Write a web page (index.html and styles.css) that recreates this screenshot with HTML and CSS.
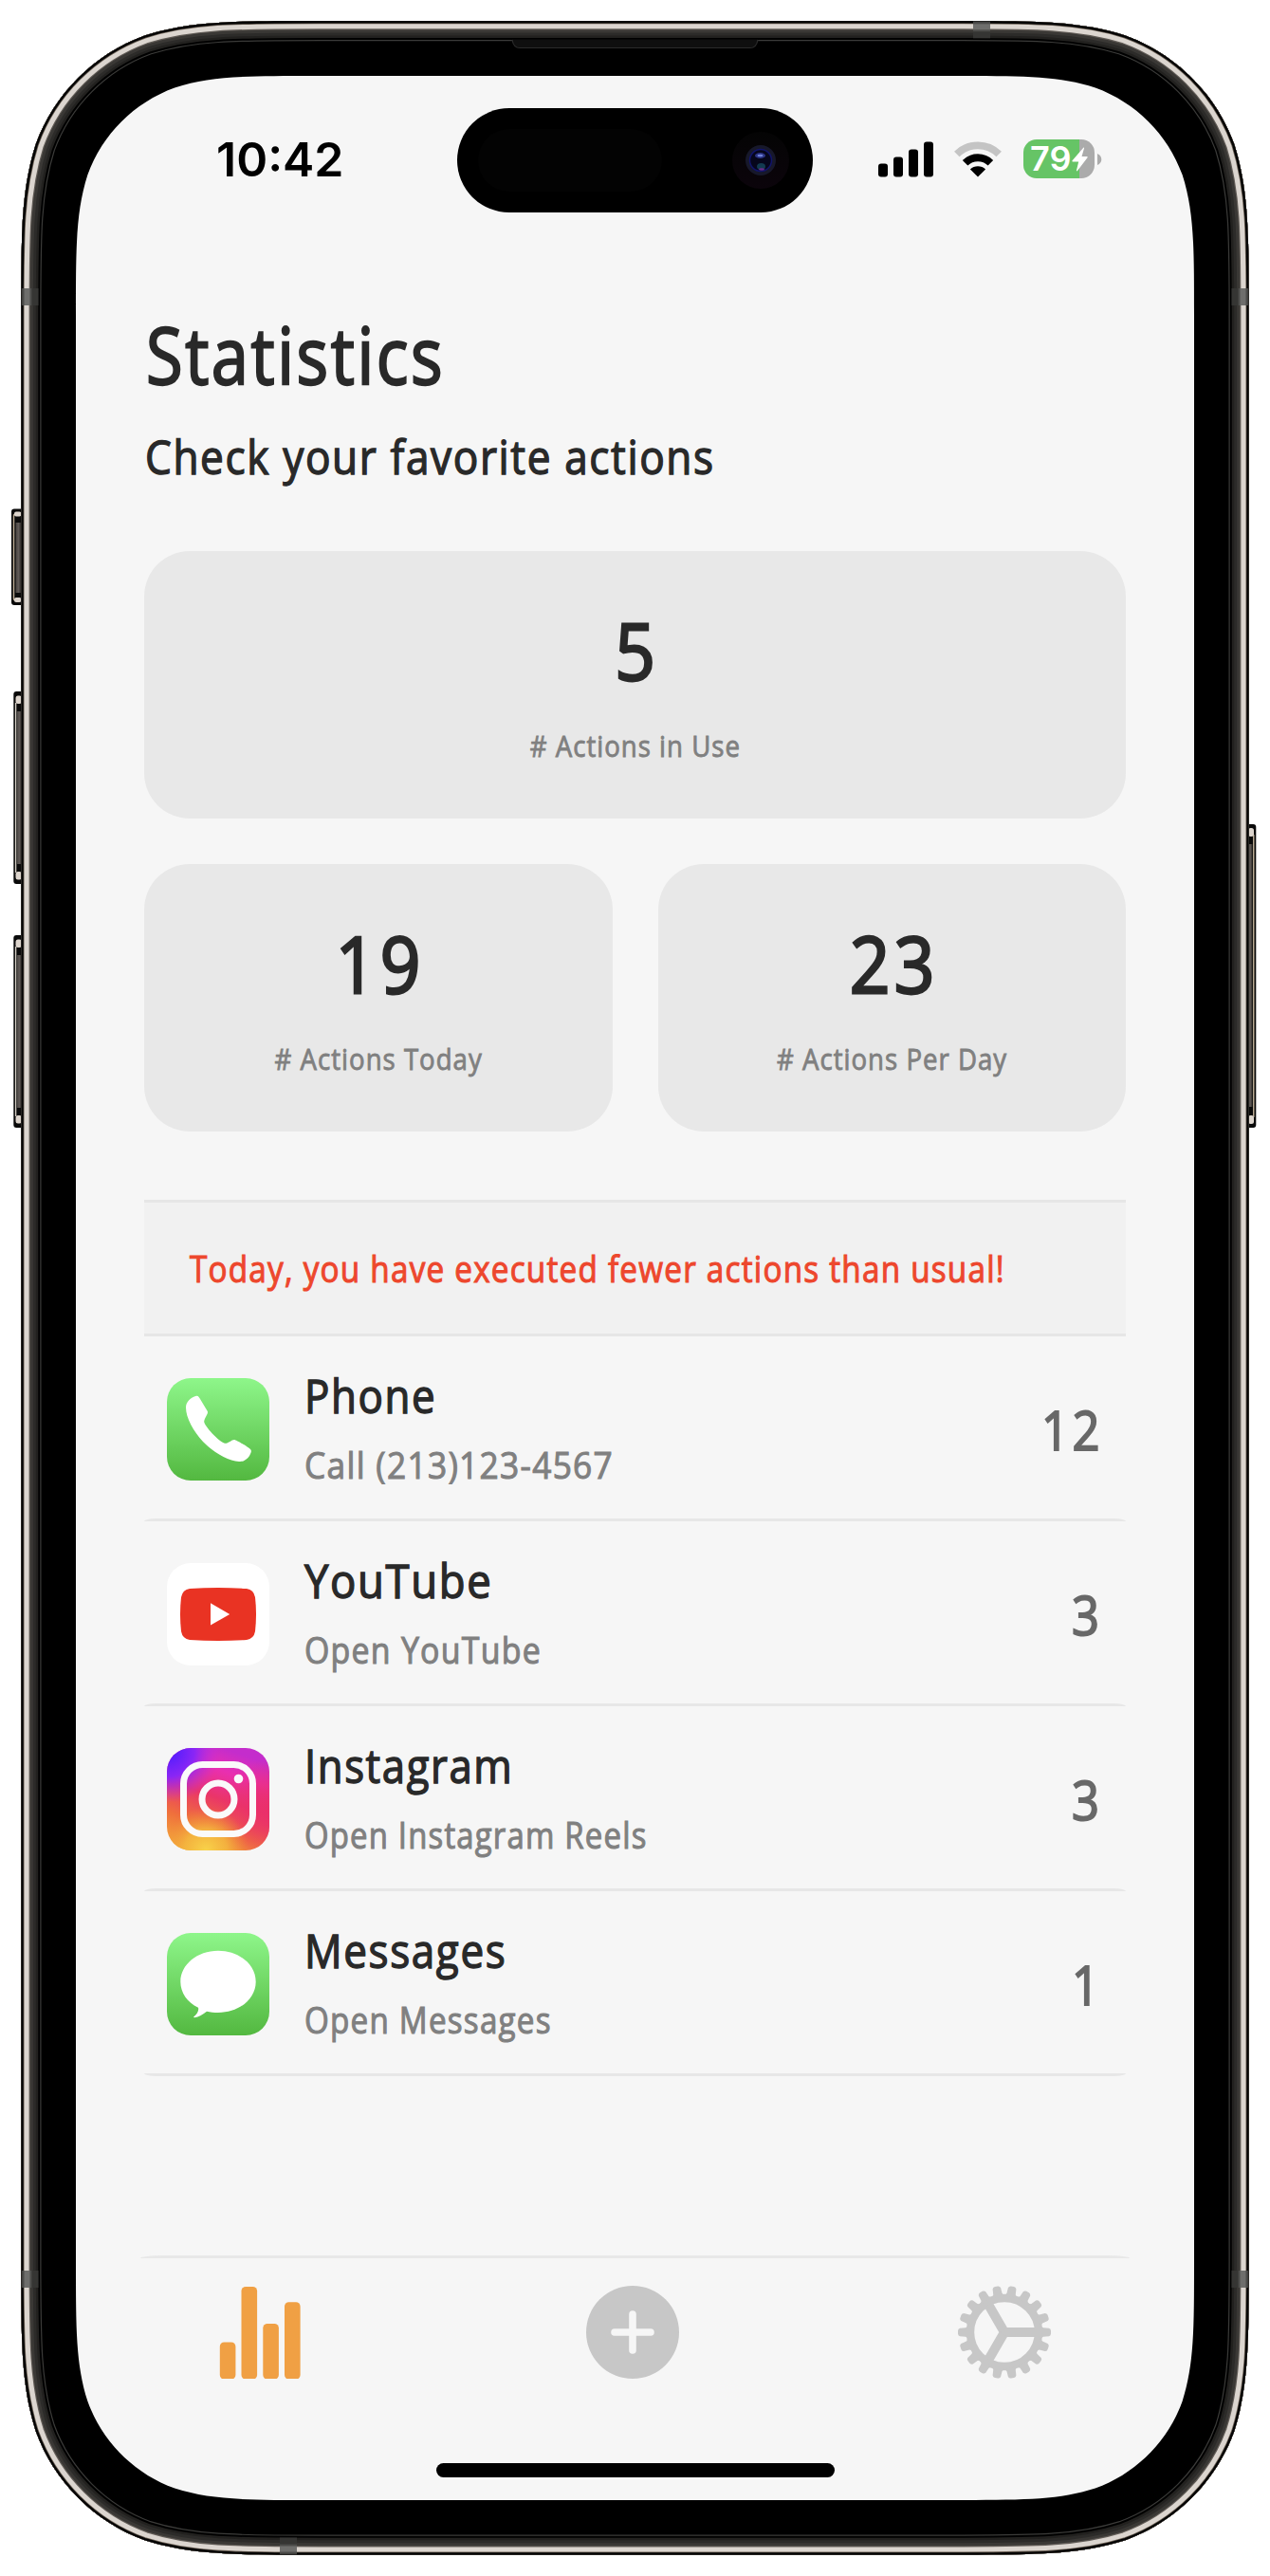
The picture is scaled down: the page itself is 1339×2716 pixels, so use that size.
FILE: index.html
```html
<!DOCTYPE html>
<html lang="en">
<head>
<meta charset="utf-8">
<title>Statistics</title>
<link rel="stylesheet" href="styles.css">
</head>
<body>
<div class="phone">
  <svg class="frame" viewBox="0 0 1339 2716" aria-hidden="true">
    <defs>
      <path id="body" d="M22.3 336.9c0-90.7 0-136 15.4-184.8c19.4-53.3 61.4-95.3 114.7-114.7c48.8-15.4 94.1-15.4 184.8-15.4h664.6c90.7 0 136 0 184.8 15.4c53.3 19.4 95.3 61.4 114.7 114.7c15.4 48.8 15.4 94.1 15.4 184.8v2041.9c0 90.7 0 136-15.4 184.8c-19.4 53.3-61.4 95.3-114.7 114.7c-48.8 15.4-94.1 15.4-184.8 15.4h-664.6c-90.7 0-136 0-184.8-15.4c-53.3-19.4-95.3-61.4-114.7-114.7c-15.4-48.8-15.4-94.1-15.4-184.8z"/>
      <clipPath id="bodyClip"><use href="#body"/></clipPath>
      <linearGradient id="key" x1="0" x2="1"><stop offset="0" stop-color="#47423f"/><stop offset=".5" stop-color="#615b58"/><stop offset="1" stop-color="#2a2725"/></linearGradient>
      <g id="band">
        <rect width="18" height="18" fill="#353533"/>
        <rect x="1" width="10" height="18" fill="#4c4c4a"/>
        <rect x="3" width="6" height="18" fill="#6e6e6c"/>
      </g>
      <g id="longKey">
        <rect x="0" y="0" width="14" height="203" rx="3" fill="#0a0a0a"/>
        <rect x="1.6" y="12" width="1.4" height="179" fill="#d5cec4"/>
        <rect x="2.2" y="4.5" width="6.5" height="8.5" rx="2.5" fill="#ddd5cd"/>
        <rect x="2.2" y="190" width="6.5" height="8.5" rx="2.5" fill="#ddd5cd"/>
        <rect x="3.6" y="21" width="5" height="161" fill="url(#key)"/>
      </g>
    </defs>
    <rect x="12" y="536.5" width="14" height="101.500" rx="3" fill="#0a0a0a"/>
    <path d="M22 542h-5.500q-2 0-2 2v87q0 2 2 2h5.500" fill="none" stroke="#b9a992" stroke-width="1.500"/>
    <rect x="15" y="539.500" width="7.500" height="5" rx="2" fill="#ddd5cd"/>
    <rect x="15" y="630" width="7.500" height="5" rx="2" fill="#ddd5cd"/>
    <rect x="16.500" y="551" width="6" height="74" fill="url(#key)"/>
    <use href="#longKey" x="14.300" y="729"/>
    <use href="#longKey" x="14.300" y="986"/>
    <g>
      <rect x="1310" y="869" width="14.300" height="320" rx="3" fill="#0a0a0a"/>
      <rect x="1321" y="880" width="1.500" height="298" fill="#b9a992"/>
      <rect x="1316" y="873" width="6" height="9" rx="2.500" fill="#ddd5cd"/>
      <rect x="1316" y="1176" width="6" height="9" rx="2.500" fill="#ddd5cd"/>
      <rect x="1316" y="890" width="4.500" height="277" fill="url(#key)"/>
    </g>
    <g clip-path="url(#bodyClip)">
      <use href="#body" fill="#000"/>
      <g fill="none">
        <use href="#body" stroke="#3b3b39" stroke-width="42.400"/>
        <use href="#body" stroke="#000" stroke-width="40"/>
        <use href="#body" stroke="#22211f" stroke-width="36"/>
        <use href="#body" stroke="#2c2b29" stroke-width="31"/>
        <use href="#body" stroke="#3a3835" stroke-width="25"/>
        <use href="#body" stroke="#605b56" stroke-width="19"/>
        <use href="#body" stroke="#dbd5cf" stroke-width="16.600"/>
        <use href="#body" stroke="#6b6055" stroke-width="6.400"/>
        <use href="#body" stroke="#050505" stroke-width="4.800"/>
      </g>
      <use href="#band" transform="translate(22.500 304)"/>
      <use href="#band" transform="translate(22.500 2394)"/>
      <use href="#band" transform="translate(1316.500 304) scale(-1 1)"/>
      <use href="#band" transform="translate(1316.500 2394) scale(-1 1)"/>
      <use href="#band" transform="translate(1044 22.300) rotate(90)"/>
      <use href="#band" transform="translate(295 2693.500) rotate(-90)"/>
      <path d="M540 41.500q1.500 8.500 8 8.500h243q6.500 0 8-8.500z" fill="#0f0f0f"/>
      <path d="M540 42q1.500 8.500 8 8.500h243q6.500 0 8-8.500" fill="none" stroke="#2b2b2b" stroke-width="1.200"/>
    </g>
    <path fill="#f6f6f6" d="M80 332.200c0-72.600 0-108.900 12.400-148c15.500-42.700 49.100-76.300 91.800-91.800c39.100-12.400 75.400-12.400 148-12.400h674.600c72.600 0 108.900 0 148 12.400c42.700 15.500 76.300 49.100 91.800 91.800c12.400 39.100 12.400 75.400 12.400 148v2051.600c0 72.600 0 108.900-12.400 148c-15.500 42.700-49.100 76.300-91.800 91.800c-39.100 12.400-75.400 12.400-148 12.400h-674.600c-72.600 0-108.900 0-148-12.400c-42.700-15.500-76.300-49.100-91.800-91.800c-12.400-39.100-12.400-75.400-12.400-148z"/>
  </svg>

  <div class="screen">
    <header class="status">
      <span class="time">10:42</span>
      <div class="island">
        <span class="sensor"></span>
        <svg class="camera" viewBox="-30 -30 60 60">
          <defs><linearGradient id="glass" x1="0" y1="0" x2="0" y2="1"><stop offset="0" stop-color="#040404"/><stop offset="1" stop-color="#0b040b"/></linearGradient></defs>
          <circle r="30" fill="url(#glass)"/>
          <circle r="16" fill="#17182a"/>
          <circle r="11.500" fill="#06061c" stroke="#11146a" stroke-width="1.500"/>
          <ellipse cx="-.5" cy="-5" rx="5.500" ry="3" fill="#2c3484"/>
          <ellipse cx="-.5" cy="-5" rx="3" ry="1.200" fill="#6f80d8"/>
          <ellipse cx=".5" cy="6.500" rx="4.500" ry="3.500" fill="#123a50"/>
          <ellipse cx="1" cy="9.500" rx="3" ry="1.300" fill="#6a2a8a"/>
        </svg>
      </div>
      <div class="indicators">
        <svg class="signal" viewBox="0 0 58 38">
          <rect x="0" y="23.500" width="10" height="14" rx="3"/><rect x="16" y="16.500" width="10" height="21" rx="3"/><rect x="32" y="8.500" width="10" height="29" rx="3"/><rect x="48" y=".5" width="10" height="37" rx="3"/>
        </svg>
        <svg class="wifi" viewBox="0 0 50 38">
          <path d="M2.800 13.500A31.500 31.500 0 0 1 47.200 13.500" fill="none" stroke="#c4c4c4" stroke-width="7.800"/>
          <path d="M11.600 22.800A19 19 0 0 1 38.400 22.800" fill="none" stroke="#000" stroke-width="7.800"/>
          <path d="M16.900 29.400A12 12 0 0 1 33.100 29.400L25 37.600Z"/>
        </svg>
        <div class="battery">
          <span class="level">79</span>
          <svg class="bolt" viewBox="0 0 17 26"><path d="M12.500 .5Q13.200 0 13 1.500L10.500 10H16Q17.200 10.200 16.300 11.500L6 25Q4.700 26 5 24.500L7.200 15.500H1Q-.2 15.300 .8 14Z"/></svg>
        </div>
        <svg class="nub" viewBox="0 0 5 12"><path d="M0 0Q4.300 2 4.300 6T0 12Z"/></svg>
      </div>
    </header>

    <main class="content">
      <h1 class="title"><span class="fit fit-92">Statistics</span></h1>
      <p class="subtitle"><span class="fit fit-95">Check your favorite actions</span></p>

      <section class="cards">
        <div class="card wide"><strong>5</strong><span class="fit">#&nbsp;Actions in Use</span></div>
        <div class="card"><strong>19</strong><span class="fit">#&nbsp;Actions Today</span></div>
        <div class="card"><strong>23</strong><span class="fit">#&nbsp;Actions Per Day</span></div>
      </section>

      <div class="banner"><span class="fit fit-944">Today, you have executed fewer actions than usual!</span></div>

      <ul class="list">
        <li class="row">
          <svg class="app" viewBox="0 0 108 108">
            <defs><linearGradient id="green" x1="0" y1="0" x2="0" y2="1"><stop offset="0" stop-color="#8ef68a"/><stop offset="1" stop-color="#53b840"/></linearGradient></defs>
            <rect width="108" height="108" rx="25" fill="url(#green)"/>
            <path fill="#fff" d="M20 31C20 25 25 20.500 31 18.800C33 18.300 34.200 20.500 35 22L42.800 35C43.800 37.500 40 41 39.200 45.500C38.500 49.500 55 67.500 61 68.800C65 69 68 65 71 65C73 65 86 73 88 75C90 77 88 80 87 82C84.500 86 80 88.500 76 88C65 87 50 79.500 38 67C28 56 20 42 20 31Z"/>
          </svg>
          <div class="names"><b class="fit fit-937">Phone</b><span class="fit fit-100">Call (213)123-4567</span></div>
          <span class="count">12</span>
        </li>
        <li class="row">
          <svg class="app" viewBox="0 0 108 108">
            <rect width="108" height="108" rx="25" fill="#fff"/>
            <path fill="#e93323" d="M24 27Q54 25 84 27Q91.500 28 93 36Q95 54 93 72Q91.500 80 84 81Q54 83 24 81Q16.500 80 15 72Q13 54 15 36Q16.500 28 24 27Z"/>
            <path fill="#fff" d="M46 42.300L66.200 54L46 65.500Z"/>
          </svg>
          <div class="names"><b class="fit fit-97">YouTube</b><span class="fit fit-957">Open YouTube</span></div>
          <span class="count">3</span>
        </li>
        <li class="row">
          <svg class="app" viewBox="0 0 108 108">
            <defs>
              <linearGradient id="ig" x1=".2" y1="1" x2=".55" y2="0"><stop offset="0" stop-color="#f3a93a"/><stop offset=".28" stop-color="#ef6f3c"/><stop offset=".55" stop-color="#ea3568"/><stop offset=".8" stop-color="#e92fb0"/><stop offset="1" stop-color="#c42dcc"/></linearGradient>
              <radialGradient id="igBlue" cx=".02" cy=".03" r=".5"><stop offset="0" stop-color="#4a1cff"/><stop offset=".5" stop-color="#8a26f5"/><stop offset="1" stop-color="#c42fe0" stop-opacity="0"/></radialGradient>
              <radialGradient id="igGold" cx=".38" cy="1" r=".42"><stop offset="0" stop-color="#f8d34a"/><stop offset=".5" stop-color="#f4b73f" stop-opacity=".85"/><stop offset="1" stop-color="#f08a3a" stop-opacity="0"/></radialGradient>
              <radialGradient id="igPink" cx="1" cy=".6" r=".5"><stop offset="0" stop-color="#ea2f6a"/><stop offset="1" stop-color="#ea2f6a" stop-opacity="0"/></radialGradient>
            </defs>
            <rect width="108" height="108" rx="25" fill="url(#ig)"/>
            <rect width="108" height="108" rx="25" fill="url(#igPink)"/>
            <rect width="108" height="108" rx="25" fill="url(#igBlue)"/>
            <rect width="108" height="108" rx="25" fill="url(#igGold)"/>
            <rect x="17.500" y="17.500" width="73" height="73" rx="20" fill="none" stroke="#fafafa" stroke-width="7"/>
            <circle cx="54" cy="54" r="17" fill="none" stroke="#fafafa" stroke-width="7"/>
            <circle cx="75.500" cy="32.500" r="4.800" fill="#fafafa"/>
          </svg>
          <div class="names"><b class="fit fit-94">Instagram</b><span class="fit fit-93">Open Instagram Reels</span></div>
          <span class="count">3</span>
        </li>
        <li class="row">
          <svg class="app" viewBox="0 0 108 108">
            <rect width="108" height="108" rx="25" fill="url(#green)"/>
            <path fill="#fff" d="M54 18.700c22 0 39.700 14.600 39.700 32.700S76 84 54 84c-4 0-8.500-.4-12-1.200c-4 3.200-8.500 6-13 6.500c-1.200 0-1-.8 0-1.500c2.500-2 5-6 4-9C21.500 73 14.300 63 14.300 51.400C14.300 33.300 32 18.700 54 18.700z"/>
          </svg>
          <div class="names"><b class="fit fit-947">Messages</b><span class="fit fit-94">Open Messages</span></div>
          <span class="count">1</span>
        </li>
      </ul>
    </main>

    <nav class="tabs">
      <svg viewBox="0 0 98 98" fill="#f0a044">
        <rect x="6.800" y="59.500" width="16.600" height="39" rx="4.500"/><rect x="29.500" y="1" width="16.600" height="97.500" rx="4.500"/><rect x="52.300" y="40" width="16.600" height="58.500" rx="4.500"/><rect x="75" y="17.300" width="16.600" height="81.200" rx="4.500"/>
      </svg>
      <svg viewBox="0 0 98 98">
        <circle cx="49" cy="49" r="49" fill="#c7c7c7"/>
        <path d="M49 30v38M30 49h38" stroke="#f6f6f6" stroke-width="7.600" stroke-linecap="round"/>
      </svg>
      <svg viewBox="-49 -49 98 98" fill="#c7c7c7" stroke="#c7c7c7">
        <circle r="36" fill="none" stroke-width="8.400"/>
        <path d="M-16.500-28.600L0 0L-16.500 28.600M0 0H34" fill="none" stroke-width="10"/>
        <path d="M-5 0L2.500-4.500V4.500Z" stroke="none"/>
        <defs><path id="tooth" stroke="none" d="M38-6.700L41-4.700L47-4.300Q49-3.500 49-1.500V1.500Q49 3.500 47 4.300L41 4.700L38 6.700Z"/></defs>
        <use href="#tooth"/><use href="#tooth" transform="rotate(20)"/><use href="#tooth" transform="rotate(40)"/><use href="#tooth" transform="rotate(60)"/><use href="#tooth" transform="rotate(80)"/><use href="#tooth" transform="rotate(100)"/><use href="#tooth" transform="rotate(120)"/><use href="#tooth" transform="rotate(140)"/><use href="#tooth" transform="rotate(160)"/><use href="#tooth" transform="rotate(180)"/><use href="#tooth" transform="rotate(200)"/><use href="#tooth" transform="rotate(220)"/><use href="#tooth" transform="rotate(240)"/><use href="#tooth" transform="rotate(260)"/><use href="#tooth" transform="rotate(280)"/><use href="#tooth" transform="rotate(300)"/><use href="#tooth" transform="rotate(320)"/><use href="#tooth" transform="rotate(340)"/>
      </svg>
    </nav>
    <div class="home"></div>
  </div>
</div>
</body>
</html>
```
FILE: styles.css
```css
* { box-sizing: border-box; margin: 0; padding: 0; }
body { background: #fff; font-family: "Open Sans", "Noto Sans", sans-serif; font-weight: 400; color: #292929; }
svg { display: block; flex: none; }

.phone { position: relative; width: 1339px; height: 2716px; overflow: hidden; }
.frame { position: absolute; inset: 0; width: 1339px; height: 2716px; }
.screen { position: relative; display: flex; flex-direction: column; width: 1339px; padding: 114px 80px 0; }

/* status bar */
.status { display: grid; grid-template-columns: 254px 375px 1fr; align-items: center; height: 110px; padding-left: 148px; }
.time { font: 600 50px/60px Inter, sans-serif; color: #000; padding-bottom: 2px; }
.island { display: flex; align-items: center; justify-content: space-between; height: 110px; border-radius: 55px; background: #000; padding: 0 25px 0 22px; }
.sensor { width: 194px; height: 66px; border-radius: 33px; background: #030303; }
.camera { width: 60px; height: 60px; }
.indicators { display: flex; align-items: center; padding-left: 69px; padding-bottom: 3px; }
.signal { width: 58px; height: 38px; }
.wifi { width: 50px; height: 38px; margin-left: 22px; }
.battery { display: flex; align-items: center; width: 75px; height: 41px; margin-left: 23px; padding-left: 7px; border-radius: 14px; background: linear-gradient(90deg, #66c466 59px, #ababab 59px); }
.level { font: 600 36px/41px Inter, sans-serif; color: #fff; width: 44px; }
.bolt { width: 17px; height: 26px; fill: #fff; }
.nub { width: 5px; height: 12px; margin-left: 3px; fill: #ababab; }

.content { padding: 104px 72px 0; }

/* condensed, medium-weight text with open tracking */
.fit { display: inline-block; white-space: nowrap; letter-spacing: .0365em; transform: scaleX(.89); transform-origin: left; -webkit-text-stroke: 0.028em currentColor; }
.fit-92 { transform: scaleX(.859); }
.fit-93 { transform: scaleX(.865); }
.fit-937 { transform: scaleX(.878); }
.fit-94 { transform: scaleX(.874); }
.fit-944 { transform: scaleX(.876); }
.fit-947 { transform: scaleX(.881); }
.fit-95 { transform: scaleX(.883); }
.fit-957 { transform: scaleX(.892); }
.fit-97 { transform: scaleX(.909); }
.fit-100 { transform: scaleX(.929); }

.title { font-size: 82px; line-height: 90px; font-weight: 400; padding-left: 2px; height: 90px; }
.subtitle { font-size: 50px; line-height: 60px; margin-top: 33px; height: 60px; padding-left: 1px; }

.cards { display: grid; grid-template-columns: 1fr 1fr; gap: 48px; margin-top: 70px; }
.card { display: flex; flex-direction: column; align-items: center; gap: 36px; height: 282px; padding-top: 59px; border-radius: 48px; background: #e8e8e8; }
.card strong { font-size: 82px; line-height: 90px; font-weight: 400; letter-spacing: .06em; margin-right: -.06em; transform: scaleX(.91); -webkit-text-stroke: 0.034em currentColor; }
.card .fit { font-size: 31px; line-height: 40px; color: #808080; transform-origin: center; }
.wide { grid-column: 1 / 3; }

.banner { height: 144px; margin-top: 72px; padding-left: 48px; border: solid #e6e6e6; border-width: 3px 0; background: #f1f1f1; color: #ed472d; font-size: 38px; line-height: 138px; }

.list { list-style: none; }
.row { position: relative; display: flex; align-items: center; height: 195px; padding: 4px 24px 3px 24px; }
.row::after { content: ""; position: absolute; left: 0; right: 0; bottom: 0; height: 3px; background: #e7e7e7; border-radius: 12px 12px 0 0 / 3px 3px 0 0; }
.row:last-child::after { border-radius: 0 0 12px 12px / 0 0 3px 3px; }
.app { width: 108px; height: 108px; }
.names { display: flex; flex-direction: column; align-items: flex-start; gap: 19px; margin-left: 36.500px; padding-bottom: 6px; }
.names b { font-size: 50px; line-height: 60px; font-weight: 400; }
.names span { font-size: 38px; line-height: 48px; color: #808080; }
.count { margin-left: auto; font-size: 57px; line-height: 60px; color: #686868; letter-spacing: .07em; transform: scaleX(.89); transform-origin: right; -webkit-text-stroke: 0.034em currentColor; }

/* tab bar */
.tabs { position: relative; display: flex; justify-content: space-between; margin: 189px 68px 0; padding: 32px 83px 0 77px; }
.tabs::before { content: ""; position: absolute; left: 0; right: 0; top: 0; height: 3px; background: #e8e8e8; border-radius: 24px 24px 0 0 / 3px 3px 0 0; }
.tabs svg { width: 98px; height: 98px; }
.home { width: 420px; height: 15px; margin: 89px auto 0; border-radius: 8px; background: #000; }
```
